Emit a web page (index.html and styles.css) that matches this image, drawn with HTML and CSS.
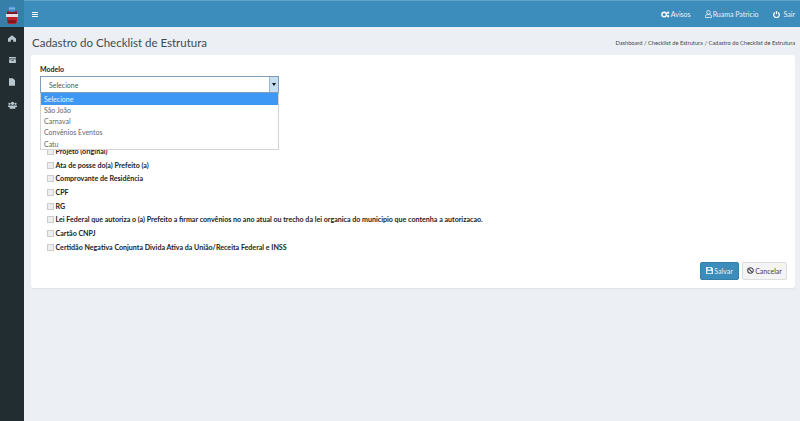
FILE: index.html
```html
<!DOCTYPE html>
<html lang="pt-BR">
<head>
<meta charset="utf-8">
<title>Cadastro do Checklist de Estrutura</title>
<link rel="stylesheet" href="styles.css">
</head>
<body>
<div class="app">
  <aside class="sidebar">
    <div class="logo">
      <svg width="12" height="18" viewBox="0 0 12 18"><path d="M1 5 H11 V15 Q11 18 8 18 H4 Q1 18 1 15 Z" fill="#c0202c"/><rect x="2.5" y="0" width="7" height="6" rx="2" fill="#3f86c8"/><rect x="3" y="1.5" width="6" height="2" fill="#79b4e0"/><rect x="1" y="6" width="10" height="2" fill="#7c1a26"/><rect x="0" y="8" width="12" height="3" fill="#e6dfe6"/><rect x="2" y="14" width="8" height="3" rx="1" fill="#7c1a1e"/></svg>
    </div>
    <nav class="side-nav">
      <svg class="side-icon" width="8" height="7" viewBox="0 0 10 8"><path d="M5 0 L10 4 V8 H6.5 V5.5 H3.5 V8 H0 V4 Z" fill="#b8c7ce"/></svg>
      <svg class="side-icon" width="7" height="6" viewBox="0 0 9 8"><path d="M0 0 H9 V2 H0 Z M0 3 H9 V8 H0 Z" fill="#b8c7ce"/><rect x="3" y="4" width="3" height="1" fill="#222d32"/></svg>
      <svg class="side-icon" width="6" height="8" viewBox="0 0 7 9"><path d="M0 0 H4.5 L7 2.5 V9 H0 Z" fill="#b8c7ce"/></svg>
      <svg class="side-icon" width="9" height="8" viewBox="0 0 11 9"><circle cx="5.5" cy="2.5" r="2" fill="#b8c7ce"/><circle cx="1.8" cy="3" r="1.4" fill="#b8c7ce"/><circle cx="9.2" cy="3" r="1.4" fill="#b8c7ce"/><path d="M0 5 H11 V7 H9 V9 H2 V7 H0 Z" fill="#b8c7ce"/></svg>
    </nav>
  </aside>
  <div class="main">
    <header class="topbar">
      <svg class="burger" width="6" height="5" viewBox="0 0 7 6"><path d="M0 0 H7 V1.2 H0 Z M0 2.4 H7 V3.6 H0 Z M0 4.8 H7 V6 H0 Z" fill="#fff"/></svg>
      <div class="top-links">
        <span class="top-link"><svg width="9" height="7" viewBox="0 0 10 8"><circle cx="3.5" cy="4" r="2.6" fill="none" stroke="#fff" stroke-width="1.6"/><circle cx="8" cy="2" r="1.3" fill="#fff"/><circle cx="8" cy="6" r="1.3" fill="#fff"/></svg>Avisos</span>
        <span class="top-link"><svg width="7" height="8" viewBox="0 0 8 9"><circle cx="4" cy="2.6" r="2.1" fill="none" stroke="#fff" stroke-width=".8"/><path d="M.5 8.5 V7 Q.5 5.4 2.2 5.2 H5.8 Q7.5 5.4 7.5 7 V8.5 Z" fill="none" stroke="#fff" stroke-width=".8"/></svg>Ruama Patricio</span>
        <span class="top-link"><svg class="power" width="7" height="7" viewBox="0 0 8 8"><path d="M2.2 1.6 A3.2 3.2 0 1 0 5.8 1.6" fill="none" stroke="#fff" stroke-width="1.4"/><path d="M4 0 V3.6" stroke="#fff" stroke-width="1.4"/></svg>Sair</span>
      </div>
    </header>
    <div class="content-head">
      <h1 class="title">Cadastro do Checklist de Estrutura</h1>
      <div class="crumbs">Dashboard / Checklist de Estrutura / Cadastro do Checklist de Estrutura</div>
    </div>
    <section class="card">
      <label class="field-label">Modelo</label>
      <div class="select-wrap">
        <div class="select-box">
          <span class="select-value">Selecione</span>
          <span class="select-arrow"><i class="caret"></i></span>
        </div>
        <ul class="dropdown">
          <li class="option active">Selecione</li>
          <li class="option">São João</li>
          <li class="option">Carnaval</li>
          <li class="option">Convênios Eventos</li>
          <li class="option">Catu</li>
        </ul>
      </div>
      <div class="checks">
        <label class="check"><i class="box"></i>Projeto (original)</label>
        <label class="check"><i class="box"></i>Ata de posse do(a) Prefeito (a)</label>
        <label class="check"><i class="box"></i>Comprovante de Residência</label>
        <label class="check"><i class="box"></i>CPF</label>
        <label class="check"><i class="box"></i>RG</label>
        <label class="check"><i class="box"></i>Lei Federal que autoriza o (a) Prefeito a firmar convênios no ano atual ou trecho da lei organica do municipio que contenha a autorizacao.</label>
        <label class="check"><i class="box"></i>Cartão CNPJ</label>
        <label class="check"><i class="box"></i>Certidão Negativa Conjunta Divida Ativa da União/Receita Federal e INSS</label>
      </div>
      <div class="actions">
        <button class="btn btn-save"><svg width="7" height="7" viewBox="0 0 8 8"><path d="M0 0 H6.5 L8 1.5 V8 H0 Z" fill="#dfeef7"/><rect x="2" y="1" width="3.5" height="2" fill="#3c8dbc"/><rect x="1.5" y="4.5" width="5" height="2.5" fill="#3c8dbc"/></svg>Salvar</button>
        <button class="btn btn-cancel"><svg width="7" height="7" viewBox="0 0 8 8"><circle cx="4" cy="4" r="3.2" fill="none" stroke="#444" stroke-width="1.2"/><path d="M1.8 1.8 L6.2 6.2" stroke="#444" stroke-width="1.2"/></svg>Cancelar</button>
      </div>
    </section>
  </div>
</div>
</body>
</html>
```
FILE: styles.css
```css
* { box-sizing: border-box; }
html, body { height: 100%; }
body {
  margin: 0;
  font-family: Lato, "Open Sans", sans-serif;
  background: #ecf0f5;
  color: #333;
  overflow: hidden;
}
.app { display: flex; height: 421px; }
.sidebar { width: 24px; flex: none; background: #222d32; }
.logo {
  height: 27px;
  background: #367fa9;
  display: flex;
  align-items: center;
  justify-content: center;
  padding-top: 2px;
}
.side-nav {
  display: flex;
  flex-direction: column;
  align-items: center;
  gap: 15px;
  padding-top: 8px;
}
.side-icon { display: block; }
.main { flex: 1; min-width: 0; }
.topbar {
  height: 27px;
  background: #3c8dbc;
  border-top: 1px solid #5fa3cc;
  display: flex;
  align-items: center;
  justify-content: space-between;
  padding: 0 5px 0 8px;
  color: #fff;
}
.burger { display: block; }
.top-links { display: flex; gap: 14px; font-size: 7px; color: #e6f1f7; }
.top-link { display: flex; align-items: center; gap: 1px; }
.power { margin-right: 3px; }
.content-head {
  height: 28px;
  display: flex;
  align-items: center;
  justify-content: space-between;
  padding: 3px 5px 0 8px;
}
.title { margin: 0; font-size: 11.5px; font-weight: 400; color: #3f4a50; }
.crumbs { font-size: 5.7px; color: #444; }
.card {
  margin: 0 5px 0 7px;
  height: 233px;
  background: #fff;
  border-radius: 3px;
  padding: 9px 8px 0 9px;
  box-shadow: 0 1px 1px rgba(0,0,0,.05);
}
.field-label { display: block; font-size: 7px; font-weight: 700; color: #222; line-height: 10px; margin-bottom: 2px; }
.select-wrap { position: relative; width: 239px; }
.select-box {
  height: 17px;
  border: 1px solid #7f9db9;
  background: #fff;
  display: flex;
  align-items: center;
  justify-content: space-between;
  padding-left: 8px;
  font-size: 7px;
  color: #555;
}
.select-arrow {
  width: 9px;
  height: 15px;
  background: #c4dff2;
  border-left: 1px solid #9db8cc;
  display: flex;
  align-items: center;
  justify-content: center;
}
.caret { border: 2px solid transparent; border-top: 3px solid #111; border-bottom: 0; }
.dropdown {
  position: absolute;
  z-index: 2;
  left: 0;
  right: 0;
  top: 17px;
  margin: 0;
  padding: 0;
  list-style: none;
  background: #fff;
  border: 1px solid #d4d4d4;
  border-top: 0;
  height: 57px;
  font-size: 7px;
  color: #666;
}
.option { height: 11.2px; line-height: 11.2px; padding-left: 3px; }
.option.active { height: 12px; line-height: 12px; background: #3c97f5; color: #e8f2fd; }
.checks {
  display: flex;
  flex-direction: column;
  margin-top: 51.5px;
  padding-left: 7px;
}
.check {
  display: flex;
  align-items: center;
  height: 13.7px;
  font-size: 7.08px;
  font-weight: 700;
  color: #222;
}
.box {
  width: 7px;
  height: 7px;
  border: 1px solid #ccc;
  background: #eee;
  margin-right: 1.5px;
  flex: none;
}
.actions { display: flex; justify-content: flex-end; gap: 3px; margin-top: 7.5px; padding-right: 0; }
.btn {
  height: 18px;
  font: inherit;
  font-size: 7px;
  border-radius: 2px;
  display: flex;
  align-items: center;
  gap: 1px;
  padding: 0 4px;
}
.btn-save { width: 39px; background: #3c8dbc; border: 1px solid #367fa9; color: #e8f2f8; justify-content: center; }
.btn-cancel { width: 45px; background: #f4f4f4; border: 1px solid #ddd; color: #444; justify-content: center; }
```
